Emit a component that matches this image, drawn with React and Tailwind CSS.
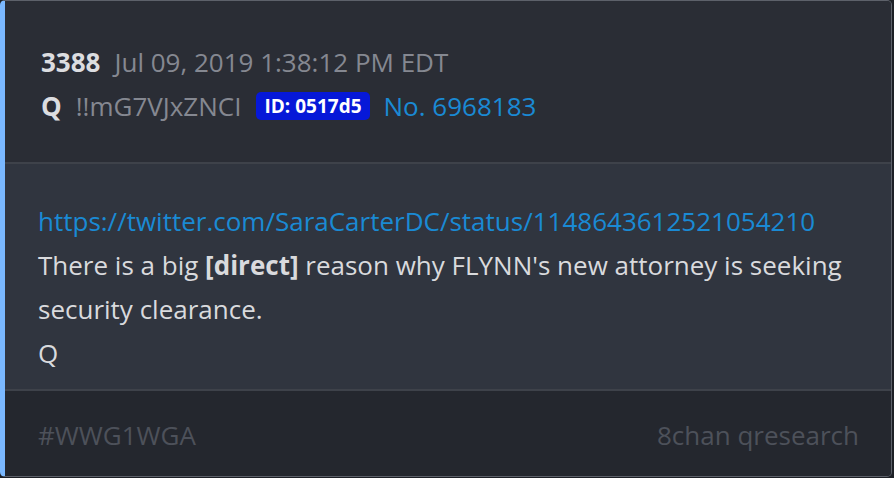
import React from 'react';

function App() {
  return (
    <div className="w-[894px] h-[478px] bg-[#1d2026]" style={{ fontFamily: '"Open Sans", "Noto Sans", sans-serif' }}>
      <div className="h-[477px] w-[892px] flex flex-col rounded-[5px] overflow-hidden border border-[#5d616a] border-l-[5px] border-l-[#7ab8ff] bg-[#2a2d35]">
        {/* Header */}
        <div className="h-[161px] pl-[36px] pt-[43px] bg-[#2a2d35]">
          <div className="flex items-center gap-[14px] text-[26px] leading-[36px]">
            <span className="font-bold text-[#dcdde0]">3388</span>
            <span className="text-[#858891]">Jul 09, 2019 1:38:12 PM EDT</span>
          </div>
          <div className="flex items-center mt-[8px] text-[26px] leading-[36px]">
            <span className="font-bold text-[#dcdde0] mr-[14px]">Q</span>
            <span className="text-[#858891] mr-[15px]">!!mG7VJxZNCI</span>
            <span className="bg-[#0618d8] text-white font-bold text-[19px] leading-[28px] px-[8px] rounded-[5px] mr-[14px]">ID: 0517d5</span>
            <span className="text-[#1a8ad4]">No. 6968183</span>
          </div>
        </div>
        <div className="h-[2px] bg-[#3e424a]" />
        {/* Body */}
        <div className="h-[225px] bg-[#30353f] pl-[33px] pt-[35px] text-[26px] leading-[44px] text-[#d9dadd]">
          <div className="text-[#1a8ad4]">https://twitter.com/SaraCarterDC/status/1148643612521054210</div>
          <div>There is a big <span className="font-bold">[direct]</span> reason why FLYNN's new attorney is seeking</div>
          <div>security clearance.</div>
          <div>Q</div>
        </div>
        <div className="h-[2px] bg-[#3e424a]" />
        {/* Footer */}
        <div className="flex-1 bg-[#24272e] flex items-center justify-between pl-[33px] pr-[32px] pt-[4px] text-[26px] text-[#4d515a]">
          <span>#WWG1WGA</span>
          <span>8chan qresearch</span>
        </div>
      </div>
    </div>
  );
}

export default App;
